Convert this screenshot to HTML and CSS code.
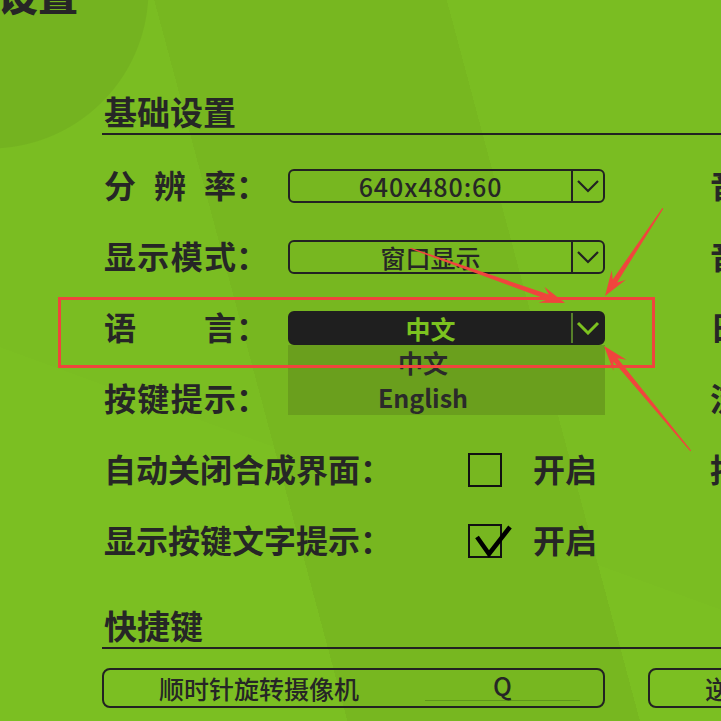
FILE: index.html
```html
<!DOCTYPE html>
<html lang="zh-CN">
<head>
    <meta charset="UTF-8">
    <meta name="viewport" content="width=device-width, initial-scale=1.0">
    <title>设置</title>
    <link rel="stylesheet" href="styles.css">
</head>
<body>
    <div class="screen">
        <h1 class="page-title">设置</h1>

        <div class="settings">
            <section class="group">
                <h2 class="group-title">基础设置</h2>
                <div class="columns">
                    <div class="col">
                        <div class="row">
                            <span class="label"><span class="label-text">分辨率</span>：</span>
                            <div class="select">
                                <span class="select-value latin">640x480:60</span>
                                <span class="select-arrow">
                                    <svg width="24" height="14" viewBox="0 0 24 14"><polyline points="2,2 12,12 22,2" fill="none" stroke="#222" stroke-width="2.2"/></svg>
                                </span>
                            </div>
                        </div>
                        <div class="row">
                            <span class="label"><span class="label-text">显示模式</span>：</span>
                            <div class="select">
                                <span class="select-value">窗口显示</span>
                                <span class="select-arrow">
                                    <svg width="24" height="14" viewBox="0 0 24 14"><polyline points="2,2 12,12 22,2" fill="none" stroke="#222" stroke-width="2.2"/></svg>
                                </span>
                            </div>
                        </div>
                        <div class="row">
                            <span class="label"><span class="label-text">语言</span>：</span>
                            <div class="select select-open">
                                <span class="select-value">中文</span>
                                <span class="select-arrow">
                                    <svg width="24" height="14" viewBox="0 0 24 14"><polyline points="2,2 12,12 22,2" fill="none" stroke="#7cc21f" stroke-width="3"/></svg>
                                </span>
                                <ul class="dropdown">
                                    <li>中文</li>
                                    <li>English</li>
                                </ul>
                            </div>
                        </div>
                        <div class="row">
                            <span class="label"><span class="label-text">按键提示</span>：</span>
                        </div>
                        <div class="row">
                            <span class="label label-wide">自动关闭合成界面：</span>
                            <span class="checkbox"></span>
                            <span class="check-text">开启</span>
                        </div>
                        <div class="row">
                            <span class="label label-wide">显示按键文字提示：</span>
                            <span class="checkbox checked">
                                <svg class="tick" width="44" height="40" viewBox="0 0 44 40"><polyline points="5,12 17,29 38,2" fill="none" stroke="#000" stroke-width="4.5"/></svg>
                            </span>
                            <span class="check-text">开启</span>
                        </div>
                    </div>

                    <div class="col col-right">
                        <div class="row"><span class="label">音乐音量：</span></div>
                        <div class="row"><span class="label">音效音量：</span></div>
                        <div class="row"><span class="label">日志输出：</span></div>
                        <div class="row"><span class="label">流畅模式：</span></div>
                        <div class="row"><span class="label">按键震动：</span></div>
                    </div>
                </div>
            </section>

            <section class="group group-keys">
                <h2 class="group-title">快捷键</h2>
                <div class="keys">
                    <div class="key-btn">
                        <span class="key-name">顺时针旋转摄像机</span>
                        <span class="key-value">Q</span>
                    </div>
                    <div class="key-btn">
                        <span class="key-name">逆时针旋转摄像机</span>
                        <span class="key-value">E</span>
                    </div>
                </div>
            </section>
        </div>

        <!-- red annotation on top of the screenshot -->
        <svg class="annotations" width="721" height="721" viewBox="0 0 721 721">
            <rect x="59.5" y="298.5" width="594" height="68" fill="none" stroke="#f0453d" stroke-width="3"/>
            <g fill="#f0453d">
                <polygon transform="translate(565 303) rotate(19.5)" points="-164,-0.6 -18,-2.6 -25,-8.5 0,0 -25,8.5 -18,2.6 -164,0.6"/>
                <polygon transform="translate(605 296) rotate(123.4)" points="-105,-0.6 -18,-2.6 -25,-8.5 0,0 -25,8.5 -18,2.6 -105,0.6"/>
                <polygon transform="translate(604 346) rotate(-129.6)" points="-136,-0.6 -18,-2.6 -25,-8.5 0,0 -25,8.5 -18,2.6 -136,0.6"/>
            </g>
        </svg>
    </div>
</body>
</html>
```

FILE: styles.css
```css
body {
    margin: 0;
    padding: 0;
    font-family: "Noto Sans CJK SC", "Noto Sans", sans-serif;
    color: #262626;
}

.screen {
    position: relative;
    width: 721px;
    height: 721px;
    overflow: hidden;
    background:
        radial-gradient(circle at -10px -10px, #74b320 0 158px, transparent 159px),
        linear-gradient(75deg, transparent 38%, #77b720 38%, #77b720 70%, transparent 70%),
        linear-gradient(200deg, transparent 62%, #7bbf22 62%),
        #7abd22;
}

.page-title {
    margin: -26px 0 0 -2px;
    font-size: 40px;
    line-height: 40px;
    font-weight: 900;
    color: #262626;
}

.settings {
    width: 1300px;
    padding-left: 102px;
    margin-top: 77px;
}

.group-title {
    margin: 0;
    padding: 0 0 2px 2px;
    font-size: 33px;
    line-height: 40px;
    font-weight: 700;
    border-bottom: 2px solid #222;
}

.columns {
    display: flex;
    margin-top: 15px;
}

.col {
    width: 503px;
    flex-shrink: 0;
}

.col-right {
    margin-left: 103px;
}

.row {
    display: flex;
    align-items: center;
    height: 71px;
}

.label {
    flex-shrink: 0;
    width: 186px;
    box-sizing: border-box;
    padding: 0 0 3px 2px;
    font-size: 32px;
    line-height: 40px;
    font-weight: 700;
    white-space: nowrap;
}

.label-text {
    display: inline-block;
    width: 132px;
    text-align: justify;
    text-align-last: justify;
}

.label-wide {
    width: 366px;
}

.select {
    position: relative;
    display: flex;
    width: 317px;
    height: 34px;
    box-sizing: border-box;
    border: 2px solid #222;
    border-radius: 6px;
}

.select-value {
    flex: 1;
    text-align: center;
    font-size: 25px;
    line-height: 30px;
    font-weight: 500;
}

.select-value.latin {
    letter-spacing: 0.9px;
}

.select-arrow {
    display: flex;
    align-items: center;
    justify-content: center;
    width: 32px;
    box-sizing: border-box;
    border-left: 2px solid #222;
}

.select-open {
    background-color: #1f1f1f;
    border-color: #1f1f1f;
}

.select-open .select-value {
    color: #7cc21f;
    font-weight: 700;
}

.select-open .select-arrow {
    border-left-color: #56802a;
}

.dropdown {
    position: absolute;
    top: 32px;
    left: -2px;
    width: 317px;
    box-sizing: border-box;
    margin: 0;
    padding: 0 47px 0 0;
    list-style: none;
    background-color: #6a9f1d;
}

.dropdown li {
    height: 35px;
    text-align: center;
    font-size: 25px;
    line-height: 34px;
    font-weight: 700;
    color: #2a2a2a;
}

.checkbox {
    position: relative;
    flex-shrink: 0;
    width: 34px;
    height: 34px;
    box-sizing: border-box;
    border: 2px solid #111;
}

.tick {
    position: absolute;
    left: 2px;
    top: -1px;
}

.check-text {
    margin-left: 31px;
    padding-bottom: 3px;
    font-size: 32px;
    line-height: 40px;
    font-weight: 700;
}

.group-keys {
    margin-top: 29px;
}

.keys {
    display: flex;
    gap: 43px;
    margin-top: 19px;
}

.key-btn {
    display: flex;
    flex-shrink: 0;
    width: 503px;
    height: 40px;
    box-sizing: border-box;
    padding-left: 55px;
    border: 2px solid #222;
    border-radius: 8px;
}

.key-name {
    font-size: 25px;
    line-height: 36px;
    font-weight: 500;
}

.key-value {
    width: 155px;
    margin: 0 23px 5px auto;
    text-align: center;
    font-size: 25px;
    line-height: 30px;
    font-weight: 500;
    border-bottom: 1px solid #5f951b;
}

.annotations {
    position: absolute;
    left: 0;
    top: 0;
    pointer-events: none;
}
```
